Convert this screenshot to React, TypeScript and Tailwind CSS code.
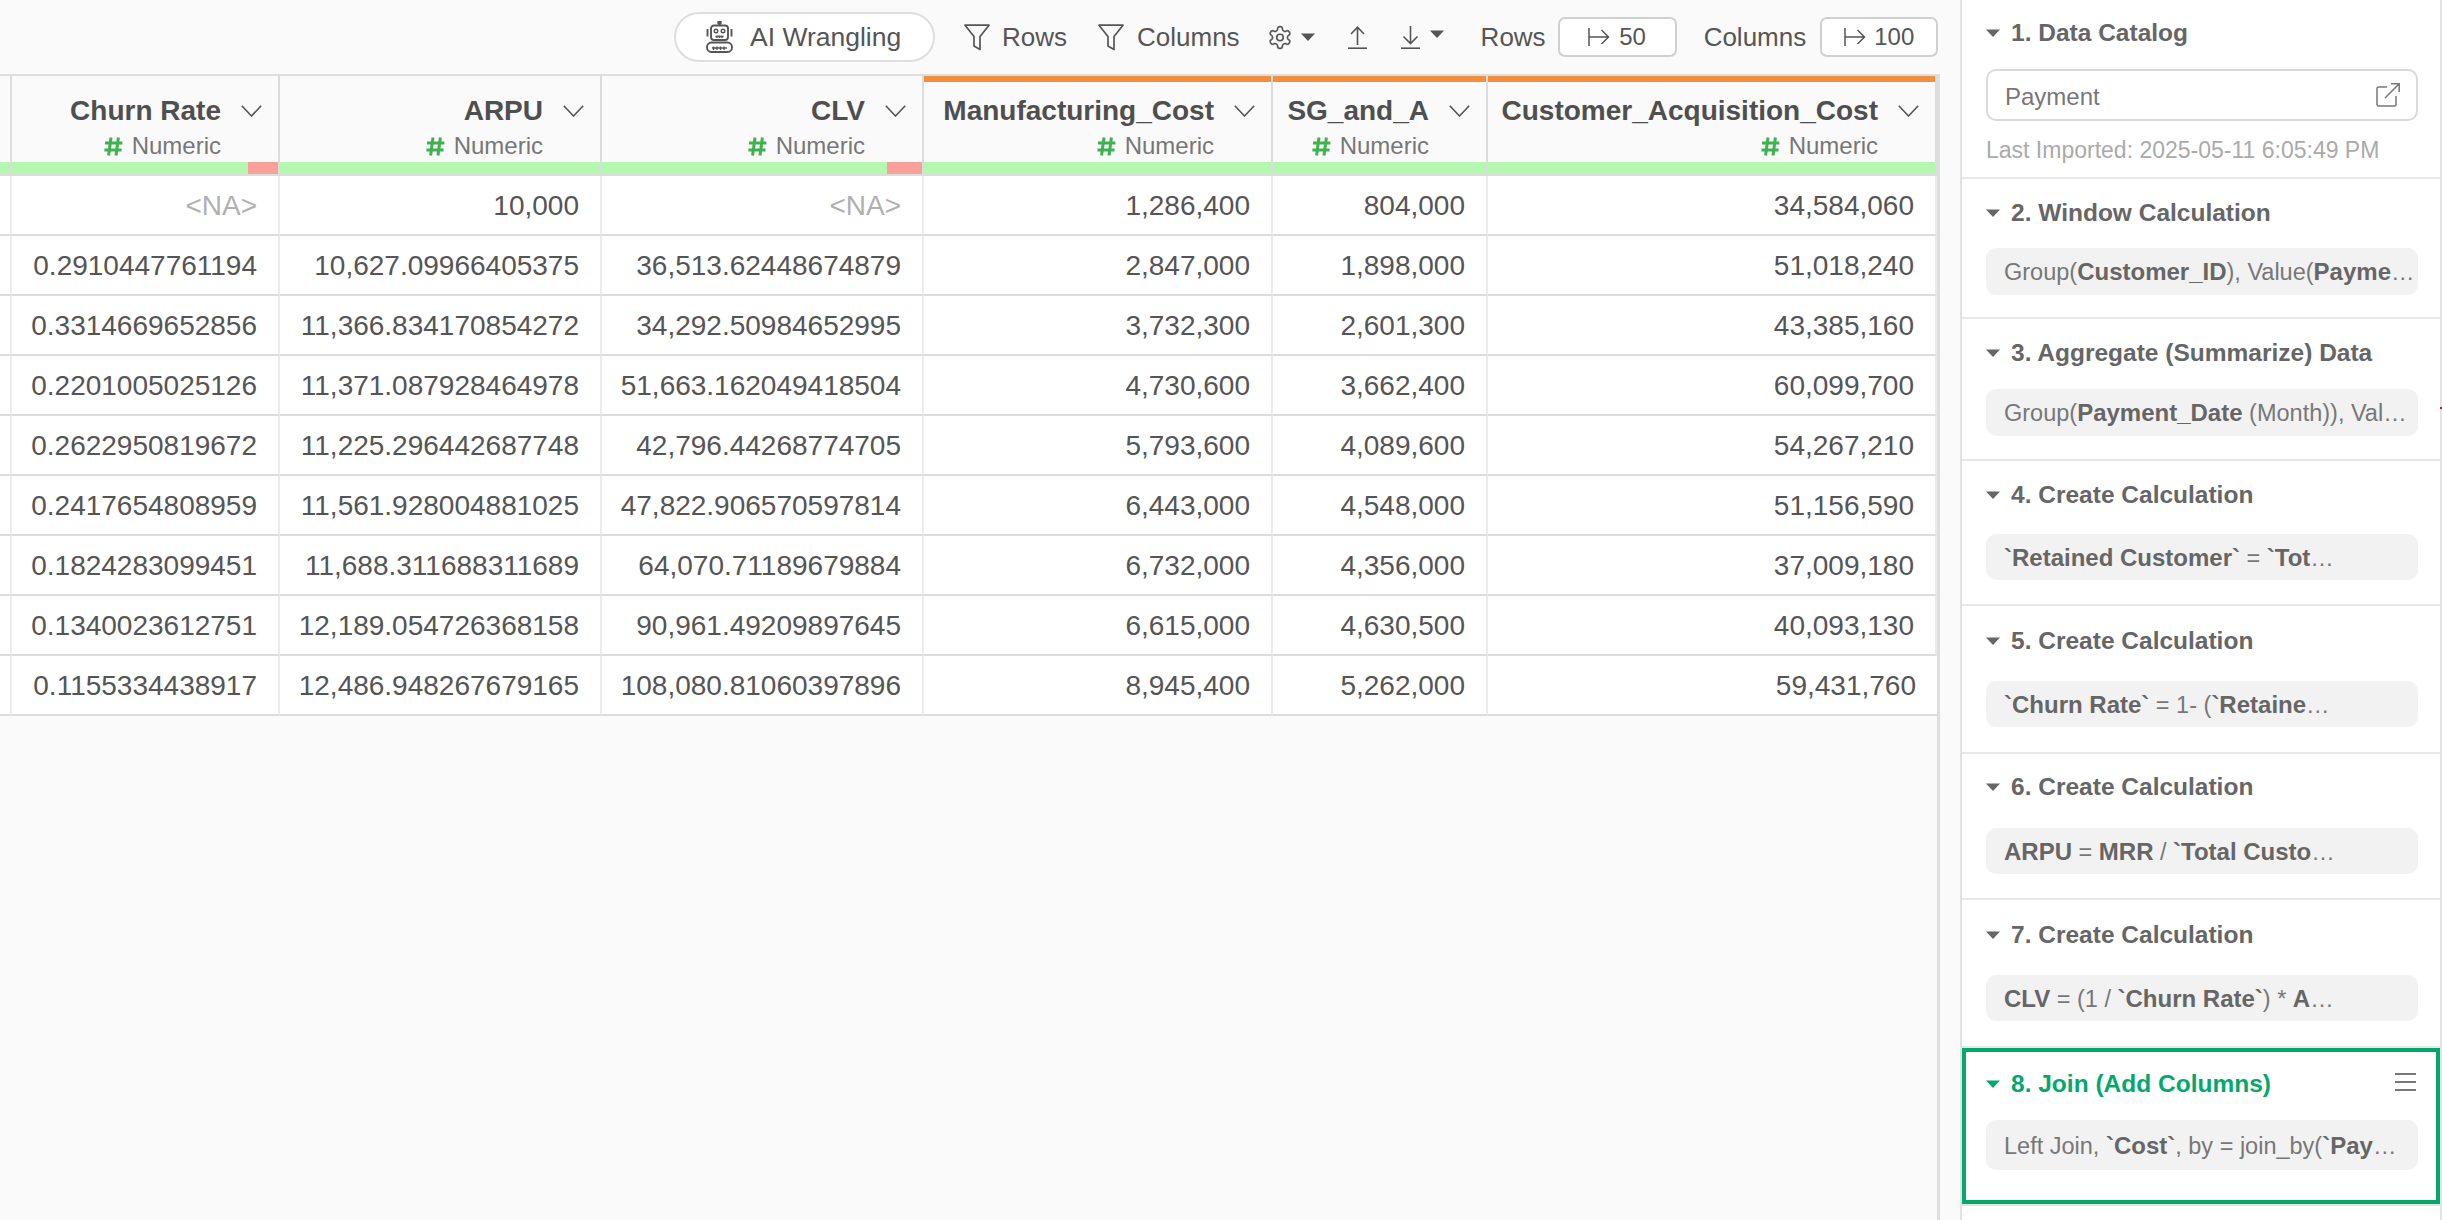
import type { ReactNode } from "react";

const FONT = "font-['Liberation_Sans',Arial,sans-serif]";

const columns = [
  { name: "Churn Rate", bad: "w-[30px]", flagged: false },
  { name: "ARPU", bad: "", flagged: false },
  { name: "CLV", bad: "w-[35px]", flagged: false },
  { name: "Manufacturing_Cost", bad: "", flagged: true },
  { name: "SG_and_A", bad: "", flagged: true },
  { name: "Customer_Acquisition_Cost", bad: "", flagged: true },
];

const rows = [
  ["<NA>", "10,000", "<NA>", "1,286,400", "804,000", "34,584,060"],
  ["0.2910447761194", "10,627.09966405375", "36,513.62448674879", "2,847,000", "1,898,000", "51,018,240"],
  ["0.3314669652856", "11,366.834170854272", "34,292.50984652995", "3,732,300", "2,601,300", "43,385,160"],
  ["0.2201005025126", "11,371.087928464978", "51,663.162049418504", "4,730,600", "3,662,400", "60,099,700"],
  ["0.2622950819672", "11,225.296442687748", "42,796.44268774705", "5,793,600", "4,089,600", "54,267,210"],
  ["0.2417654808959", "11,561.928004881025", "47,822.906570597814", "6,443,000", "4,548,000", "51,156,590"],
  ["0.1824283099451", "11,688.311688311689", "64,070.71189679884", "6,732,000", "4,356,000", "37,009,180"],
  ["0.1340023612751", "12,189.054726368158", "90,961.49209897645", "6,615,000", "4,630,500", "40,093,130"],
  ["0.1155334438917", "12,486.948267679165", "108,080.81060397896", "8,945,400", "5,262,000", "59,431,760"],
];

function Caret({ className = "" }: { className?: string }) {
  return (
    <svg viewBox="0 0 14 8" className={`w-[14px] h-[8px] shrink-0 fill-current ${className}`}>
      <path d="M0 0.5 H14 L7 8 Z" />
    </svg>
  );
}

function Chevron() {
  return (
    <svg viewBox="0 0 21 12" className="w-[21px] h-[12px] shrink-0 fill-none stroke-[#555] stroke-[1.6]">
      <path d="M0.8 0.8 L10.5 11 L20.2 0.8" />
    </svg>
  );
}

function Hash() {
  return (
    <svg viewBox="0 0 19 19" className="w-[19px] h-[19px] shrink-0 fill-none stroke-[#3fb24f] stroke-[3]">
      <path d="M7 0.5 L4.6 18.5 M14.4 0.5 L12 18.5 M1 6 H18.4 M0.4 13 H17.6" />
    </svg>
  );
}

function Funnel() {
  return (
    <svg viewBox="0 0 26 27" className="w-[26px] h-[27px] shrink-0 fill-none stroke-[#555] stroke-[1.7]" strokeLinejoin="round">
      <path d="M1 1.2 H25 L16 12.5 V25.5 L10 22 V12.5 Z" />
    </svg>
  );
}

function Robot() {
  return (
    <svg viewBox="0 0 27 32" className="w-[27px] h-[32px] shrink-0 fill-none stroke-[#555] stroke-[1.9]">
      <path d="M13.5 1 V4.5" />
      <circle cx="13.5" cy="1.6" r="1.4" className="fill-[#555]" />
      <rect x="5" y="4.5" width="17" height="14.5" rx="3" />
      <circle cx="10" cy="10" r="1.8" strokeWidth="1.4" />
      <circle cx="17" cy="10" r="1.8" strokeWidth="1.4" />
      <path d="M9.5 15.5 H17.5 M11 14.5 V17 M13.5 14.5 V17 M16 14.5 V17" strokeWidth="1.3" />
      <path d="M1.5 8 V15.5 M25.5 8 V15.5" />
      <rect x="1" y="21.5" width="25" height="9.5" rx="4.5" />
      <path d="M6 27 H21 M7.5 25.5 V29 M11 25.5 V29 M14.5 25.5 V29 M18 25.5 V29" strokeWidth="1.3" />
    </svg>
  );
}

function Gear() {
  return (
    <svg viewBox="0 0 24 24" className="w-[26px] h-[27px] shrink-0 fill-none stroke-[#555] stroke-[1.5]" strokeLinejoin="round">
      <path d="M12.22 2h-.44a2 2 0 0 0-2 2v.18a2 2 0 0 1-1 1.73l-.43.25a2 2 0 0 1-2 0l-.15-.08a2 2 0 0 0-2.73.73l-.22.38a2 2 0 0 0 .73 2.73l.15.1a2 2 0 0 1 1 1.72v.51a2 2 0 0 1-1 1.74l-.15.09a2 2 0 0 0-.73 2.73l.22.38a2 2 0 0 0 2.73.73l.15-.08a2 2 0 0 1 2 0l.43.25a2 2 0 0 1 1 1.73V20a2 2 0 0 0 2 2h.44a2 2 0 0 0 2-2v-.18a2 2 0 0 1 1-1.73l.43-.25a2 2 0 0 1 2 0l.15.08a2 2 0 0 0 2.73-.73l.22-.39a2 2 0 0 0-.73-2.73l-.15-.08a2 2 0 0 1-1-1.74v-.5a2 2 0 0 1 1-1.74l.15-.09a2 2 0 0 0 .73-2.73l-.22-.38a2 2 0 0 0-2.73-.73l-.15.08a2 2 0 0 1-2 0l-.43-.25a2 2 0 0 1-1-1.73V4a2 2 0 0 0-2-2z" />
      <circle cx="12" cy="12" r="3" />
    </svg>
  );
}

function ArrowBar({ down = false }: { down?: boolean }) {
  return (
    <svg viewBox="0 0 19 23" className="w-[19px] h-[23px] shrink-0 fill-none stroke-[#555] stroke-[1.6]">
      {down ? <path d="M9.5 0 V17 M2.5 10.5 L9.5 17.5 L16.5 10.5" /> : <path d="M9.5 19 V1.5 M3 8 L9.5 1.2 L16 8" />}
      <path d="M0 22.2 H19" />
    </svg>
  );
}

function Jump() {
  return (
    <svg viewBox="0 0 22 18" className="w-[22px] h-[18px] shrink-0 fill-none stroke-[#555] stroke-[1.5]">
      <path d="M1 0 V18 M1 9 H20.5 M13.5 2 L20.5 9 L13.5 16" />
    </svg>
  );
}

function External() {
  return (
    <svg viewBox="0 0 24 24" className="w-[24px] h-[24px] shrink-0 fill-none stroke-[#777] stroke-[1.5]">
      <path d="M11 4 H2.5 A1.5 1.5 0 0 0 1 5.5 V21.5 A1.5 1.5 0 0 0 2.5 23 H18.5 A1.5 1.5 0 0 0 20 21.5 V13" />
      <path d="M9 15 L23 1 M15 0.8 H23.2 V9" />
    </svg>
  );
}

function Hamburger() {
  return (
    <div className="absolute right-[20px] top-[21px] w-[21px] flex flex-col gap-[6px]">
      <div className="h-[2px] bg-[#777]" />
      <div className="h-[2px] bg-[#777]" />
      <div className="h-[2px] bg-[#777]" />
    </div>
  );
}

function Toolbar() {
  return (
    <div className="h-[74px] flex items-center text-[26px] text-[#555] pl-[674px]">
      <button className="w-[261px] h-[50px] rounded-full border-2 border-[#dedede] bg-white flex items-center pl-[30px] gap-[17px] text-[26.5px] text-[#555]">
        <Robot />
        <span className="pt-[2px]">AI Wrangling</span>
      </button>
      <div className="ml-[29px] flex items-center gap-[12px]">
        <Funnel />
        Rows
      </div>
      <div className="ml-[31px] flex items-center gap-[13px]">
        <Funnel />
        Columns
      </div>
      <div className="ml-[27px] flex items-center gap-[8px]">
        <Gear />
        <Caret className="text-[#555]" />
      </div>
      <div className="ml-[33px]">
        <ArrowBar />
      </div>
      <div className="ml-[34px] flex items-center gap-[10px]">
        <ArrowBar down />
        <Caret className="text-[#555] -mt-[6px]" />
      </div>
      <span className="ml-[37px]">Rows</span>
      <div className="ml-[12px] w-[119px] h-[40px] rounded-[7px] border-2 border-[#d0d0d0] bg-white flex items-center justify-center gap-[9px] text-[24px]">
        <Jump />
        50
      </div>
      <span className="ml-[27px]">Columns</span>
      <div className="ml-[14px] w-[118px] h-[40px] rounded-[7px] border-2 border-[#d0d0d0] bg-white flex items-center justify-center gap-[8px] text-[24px]">
        <Jump />
        100
      </div>
    </div>
  );
}

function Table() {
  return (
    <div className="grid grid-cols-[12px_268px_322px_322px_349px_215px_449px]">
      {/* header row */}
      <div className="h-[86px] bg-[#fafafa] border-r-2 border-[#dcdcdc]" />
      {columns.map((c) => (
        <div key={c.name} className="h-[86px] bg-[#fafafa] border-r-2 last:border-r-0 border-[#dcdcdc] flex flex-col">
          <div className={c.flagged ? "h-[6px] bg-[#f0903c]" : "h-[6px]"} />
          <div className="mt-[12px] h-[34px] flex items-center justify-end gap-[20px] pr-[16px]">
            <span className="text-[28px] font-bold text-[#4f4f4f] whitespace-nowrap">{c.name}</span>
            <Chevron />
          </div>
          <div className="mt-[4px] h-[28px] flex items-center justify-end gap-[9px] pr-[57px]">
            <Hash />
            <span className="text-[24px] text-[#777]">Numeric</span>
          </div>
        </div>
      ))}

      {/* quality bar */}
      <div className="h-[14px] bg-[#b5f7b0] border-r-2 border-b-2 border-[#dcdcdc]" />
      {columns.map((c) => (
        <div key={c.name} className="h-[14px] bg-[#b5f7b0] border-r-2 last:border-r-0 border-b-2 border-[#dcdcdc] flex justify-end">
          {c.bad && <div className={`${c.bad} h-full bg-[#f8a19a]`} />}
        </div>
      ))}

      {rows.map((row, i) => (
        <Row key={i} row={row} />
      ))}
    </div>
  );
}

function Row({ row }: { row: string[] }) {
  return (
    <>
      <div className="h-[60px] bg-white border-r-2 border-b-2 border-r-[#ececec] border-b-[#dcdcdc]" />
      {row.map((v, i) => (
        <div
          key={i}
          className={`h-[60px] bg-white border-r-2 last:border-r-0 border-b-2 border-r-[#ececec] border-b-[#dcdcdc] flex items-center justify-end pr-[21px] pt-[2px] text-[28px] whitespace-nowrap ${
            v === "<NA>" ? "text-[#b0b0b0] text-[26px]" : "text-[#555]"
          }`}
        >
          {v}
        </div>
      ))}
    </>
  );
}

function Title({ children, green = false }: { children: ReactNode; green?: boolean }) {
  return (
    <div className={`h-[28px] flex items-center gap-[11px] text-[24.5px] font-bold ${green ? "text-[#04a86c]" : "text-[#666]"}`}>
      <Caret />
      <span>{children}</span>
    </div>
  );
}

function Summary({ className, children }: { className: string; children: ReactNode }) {
  return (
    <div className={`rounded-[10px] bg-[#f2f2f2] flex items-center pl-[18px] pt-[2px] text-[23.5px] text-[#777] whitespace-nowrap overflow-hidden ${className}`}>
      <span>{children}</span>
    </div>
  );
}

function B({ children }: { children: ReactNode }) {
  return <b className="font-bold text-[24px] text-[#666]">{children}</b>;
}

function Sidebar() {
  return (
    <div className="relative w-[482px] h-full bg-white border-l-2 border-r-2 border-[#e2e2e2] flex flex-col">
      {/* stray red mark on the edge of the panel */}
      <div className="absolute -right-[2px] top-[407px] w-[2px] h-[2px] bg-[#b01c1c]" />

      <section className="h-[179px] shrink-0 pt-[19px] pl-[24px] pr-[22px] border-b-2 border-[#e8e8e8]">
        <Title>1. Data Catalog</Title>
        <div className="mt-[22px] h-[52px] rounded-[10px] border-2 border-[#dadada] flex items-center justify-between pl-[17px] pr-[16px] text-[24px] text-[#777]">
          <span className="pt-[4px]">Payment</span>
          <External />
        </div>
        <div className="mt-[15px] h-[28px] flex items-center text-[23px] text-[#aaa] whitespace-nowrap">Last Imported: 2025-05-11 6:05:49 PM</div>
      </section>

      <section className="h-[140px] shrink-0 pt-[20px] pl-[24px] pr-[22px] border-b-2 border-[#e8e8e8]">
        <Title>2. Window Calculation</Title>
        <Summary className="mt-[21px] h-[47px]">
          Group(<B>Customer_ID</B>), Value(<B>Payme</B>…
        </Summary>
      </section>

      <section className="h-[142px] shrink-0 pt-[20px] pl-[24px] pr-[22px] border-b-2 border-[#e8e8e8]">
        <Title>3. Aggregate (Summarize) Data</Title>
        <Summary className="mt-[22px] h-[47px]">
          Group(<B>Payment_Date</B> (Month)), Val…
        </Summary>
      </section>

      <section className="h-[145px] shrink-0 pt-[20px] pl-[24px] pr-[22px] border-b-2 border-[#e8e8e8]">
        <Title>4. Create Calculation</Title>
        <Summary className="mt-[25px] h-[46px]">
          <B>`Retained Customer`</B> = <B>`Tot</B>…
        </Summary>
      </section>

      <section className="h-[148px] shrink-0 pt-[21px] pl-[24px] pr-[22px] border-b-2 border-[#e8e8e8]">
        <Title>5. Create Calculation</Title>
        <Summary className="mt-[26px] h-[46px]">
          <B>`Churn Rate`</B> = 1- (<B>`Retaine</B>…
        </Summary>
      </section>

      <section className="h-[146px] shrink-0 pt-[19px] pl-[24px] pr-[22px] border-b-2 border-[#e8e8e8]">
        <Title>6. Create Calculation</Title>
        <Summary className="mt-[27px] h-[46px]">
          <B>ARPU</B> = <B>MRR</B> / <B>`Total Custo</B>…
        </Summary>
      </section>

      <section className="h-[148px] shrink-0 pt-[21px] pl-[24px] pr-[22px] border-b-2 border-[#e8e8e8]">
        <Title>7. Create Calculation</Title>
        <Summary className="mt-[26px] h-[46px]">
          <B>CLV</B> = (1 / <B>`Churn Rate`</B>) * <B>A</B>…
        </Summary>
      </section>

      <div className="h-[158px] shrink-0 border-b-2 border-[#e2e2e2]">
        <section className="relative h-[156px] pt-[18px] pl-[20px] pr-[18px] border-4 border-[#04a86c]">
          <Title green>8. Join (Add Columns)</Title>
          <Hamburger />
          <Summary className="mt-[22px] h-[50px]">
            Left Join, <B>`Cost`</B>, by = join_by(<B>`Pay</B>…
          </Summary>
        </section>
      </div>
    </div>
  );
}

export default function App() {
  return (
    <div className={`${FONT} w-[2442px] h-[1220px] overflow-hidden bg-[#fafafa] flex`}>
      <div className="w-[1940px] h-full shrink-0 flex flex-col">
        <Toolbar />
        <div className="flex-1 border-t-2 border-r-[3px] border-[#dedede]">
          <Table />
        </div>
      </div>
      <div className="w-[20px] shrink-0" />
      <Sidebar />
    </div>
  );
}
